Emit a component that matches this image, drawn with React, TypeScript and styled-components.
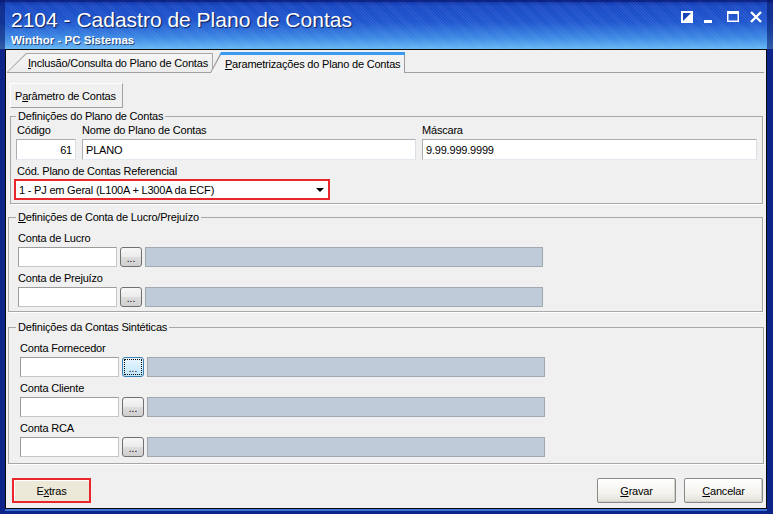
import React from 'react';
import styled, { createGlobalStyle } from 'styled-components';

const GlobalStyle = createGlobalStyle`
  html, body {
    margin: 0;
    padding: 0;
    background: #ffffff;
  }
  body {
    font-family: "Liberation Sans", Arial, sans-serif;
    font-size: 11px;
    letter-spacing: -0.2px;
    color: #000;
  }
  * {
    box-sizing: border-box;
  }
`;

const Window = styled.div`
  width: 773px;
  height: 514px;
  display: flex;
  flex-direction: column;
  background: #0d2588;
  overflow: hidden;
`;

/* barra de titulo */
const TitleBar = styled.div`
  height: 49px;
  flex: none;
  display: flex;
  justify-content: space-between;
  align-items: flex-start;
  padding: 8px 11px 0 11px;
  color: #fff;
  background:
    repeating-linear-gradient(45deg, rgba(255, 255, 255, 0.07) 0 1px, transparent 1px 2px),
    linear-gradient(180deg, #0b2a9e 0px, #1848c4 6px, #1d55cf 22px, #3b88e4 38px, #66b6f4 49px);
  box-shadow:
    inset 5px 0 0 rgba(6, 20, 100, 0.55),
    inset -6px 0 0 rgba(6, 20, 100, 0.55),
    inset 0 2px 0 rgba(6, 20, 100, 0.5);
`;

const TitleBlock = styled.div`
  display: flex;
  flex-direction: column;
`;

const Heading = styled.div`
  font-size: 21px;
  line-height: 24px;
  letter-spacing: 0;
  text-shadow: 1px 1px 1px rgba(0, 0, 40, 0.7);
`;

const SubHeading = styled.div`
  font-size: 11.5px;
  font-weight: bold;
  line-height: 13px;
  margin-top: 2px;
  letter-spacing: 0;
  text-shadow: 1px 1px 0 rgba(0, 0, 40, 0.6);
`;

const Controls = styled.div`
  display: flex;
  align-items: flex-start;
  margin-top: 3px;
`;

const ControlIcon = styled.svg<{ $gap?: number }>`
  display: block;
  margin-left: ${p => p.$gap ?? 0}px;
`;

/* area cliente */
const Client = styled.div`
  flex: 1;
  display: flex;
  flex-direction: column;
  margin: 0 6px 5px 5px;
  border: 1px solid #0a0a0a;
  background: #f0f0f0;
  box-shadow: 0 2px 0 #3a72d8;
`;

const TabsRow = styled.div`
  display: flex;
  align-items: flex-end;
  height: 21px;
  margin: 2px 0 -1px 1px;
  position: relative;
  z-index: 1;
`;

const TabShape = styled.div<{ $active?: boolean; $slant: number; $overlap?: number }>`
  display: flex;
  height: ${p => (p.$active ? 21 : 19)}px;
  margin-bottom: ${p => (p.$active ? 0 : 1)}px;
  margin-left: ${p => p.$overlap ?? 0}px;
  padding: ${p => (p.$active ? '3px 1px 0 1px' : '1px 1px 0 1px')};
  clip-path: polygon(${p => p.$slant}px 0, 100% 0, 100% 100%, 0 100%);
  background: ${p =>
    p.$active ? 'linear-gradient(180deg, #3a9af2 0 3px, #9a9a9a 3px)' : '#a6a6a6'};
`;

const TabFace = styled.div<{ $active?: boolean; $slant: number; $padLeft: number }>`
  flex: 1;
  display: flex;
  align-items: center;
  padding: 0 4px 0 ${p => p.$padLeft}px;
  white-space: nowrap;
  background: ${p => (p.$active ? '#f2f2f2' : 'linear-gradient(180deg, #f6f6f6, #ececec)')};
  clip-path: polygon(${p => p.$slant}px 0, 100% 0, 100% 100%, 0 100%);
`;

const Sheet = styled.div`
  height: 392px;
  flex: none;
  display: flex;
  flex-direction: column;
  margin: 0 2px 0 1px;
  border-top: 1px solid #a0a0a0;
`;

const PageButton = styled.div`
  width: 113px;
  height: 25px;
  margin: 10px 0 0 3px;
  padding-left: 4px;
  display: flex;
  align-items: center;
  border: 1px solid;
  border-color: #ffffff #a0a0a0 #a0a0a0 #ffffff;
  background: #f0f0f0;
`;

const Group = styled.fieldset<{ $mt: number; $ml: number; $mr: number; $pl: number }>`
  margin: ${p => p.$mt}px ${p => p.$mr}px 0 ${p => p.$ml}px;
  padding: 0 5px 0 ${p => p.$pl}px;
  min-width: 0;
  border: 1px solid #a7a7a7;
  box-shadow: 1px 1px 0 #ffffff;
  display: flex;
  flex-direction: column;
`;

const Legend = styled.legend<{ $offset: number }>`
  padding: 0 2px;
  margin-left: ${p => p.$offset}px;
  line-height: 13px;
  font-size: 11px;
`;

const PlanGrid = styled.div`
  display: grid;
  grid-template-columns: 60px 334px 1fr;
  column-gap: 6px;
`;

const FieldBlock = styled.div<{ $mt?: number; $pb?: number }>`
  display: flex;
  flex-direction: column;
  margin-top: ${p => p.$mt ?? 0}px;
  padding-bottom: ${p => p.$pb ?? 0}px;
`;

const FieldLabel = styled.div<{ $indent?: number }>`
  height: 14px;
  line-height: 14px;
  padding-left: ${p => p.$indent ?? 1}px;
  white-space: nowrap;
`;

const TextBox = styled.div<{ $align?: 'left' | 'right' }>`
  height: 21px;
  margin-top: 2px;
  padding: 0 3px;
  display: flex;
  align-items: center;
  justify-content: ${p => (p.$align === 'right' ? 'flex-end' : 'flex-start')};
  background: #ffffff;
  border: 1px solid;
  border-color: #abadb3 #dbdfe6 #e3e9ef #abadb3;
  white-space: nowrap;
`;

const Combo = styled.div`
  width: 316px;
  height: 21px;
  margin: 1px 0 0 -2px;
  padding: 0 4px 0 3px;
  display: flex;
  align-items: center;
  justify-content: space-between;
  background: #ffffff;
  border: 2px solid #e8262b;
  white-space: nowrap;
`;

const ComboArrow = styled.span`
  width: 0;
  height: 0;
  border-left: 4px solid transparent;
  border-right: 4px solid transparent;
  border-top: 4px solid #000;
`;

const GroupBody = styled.div<{ $pt: number; $pb: number }>`
  display: flex;
  flex-direction: column;
  gap: 4px;
  padding: ${p => p.$pt}px 0 ${p => p.$pb}px 0;
`;

const LookupRow = styled.div`
  display: flex;
  gap: 3px;
  height: 20px;
  margin-top: 2px;
`;

const CodeBox = styled.div`
  width: 99px;
  height: 20px;
  background: #ffffff;
  border: 1px solid #9c9c9c;
  border-right-color: #c6c6c6;
  border-bottom-color: #c6c6c6;
`;

const BrowseButton = styled.div<{ $focused?: boolean }>`
  width: 22px;
  height: 20px;
  display: flex;
  align-items: flex-end;
  justify-content: center;
  padding-bottom: 3px;
  font-size: 10px;
  line-height: 8px;
  letter-spacing: 0;
  border: 1px solid ${p => (p.$focused ? '#3c7fb1' : '#707070')};
  border-radius: 3px;
  background: ${p =>
    p.$focused
      ? 'linear-gradient(180deg, #eaf6fd, #bee6fd)'
      : 'linear-gradient(180deg, #f6f6f6 0%, #ebebeb 50%, #dddddd 51%, #cfcfcf 100%)'};
  outline: ${p => (p.$focused ? '1px dotted #000' : 'none')};
  outline-offset: -3px;
`;

const DescBox = styled.div`
  width: 398px;
  height: 20px;
  background: #bfcbd8;
  border: 1px solid #a2a8b0;
`;

const Footer = styled.div`
  flex: 1;
  display: flex;
  justify-content: space-between;
  align-items: flex-start;
  padding: 14px 3px 0 6px;
`;

const FooterActions = styled.div`
  display: flex;
  gap: 8px;
`;

const FooterButton = styled.div<{ $extras?: boolean }>`
  width: 79px;
  height: 25px;
  display: flex;
  align-items: center;
  justify-content: center;
  border: ${p => (p.$extras ? '2px solid #e8262b' : '1px solid #8a8a8a')};
  border-radius: ${p => (p.$extras ? 0 : 2)}px;
  background: ${p =>
    p.$extras ? '#ece9d8' : 'linear-gradient(180deg, #ffffff 0%, #f4f3ee 60%, #e2e0d8 100%)'};
  box-shadow: ${p => (p.$extras ? 'inset 1px 1px 0 #ffffff' : 'inset -1px -1px 0 #d0cfc8')};
`;

function LookupField({ label, focused }: { label: string; focused?: boolean }) {
  return (
    <FieldBlock>
      <FieldLabel $indent={0}>{label}</FieldLabel>
      <LookupRow>
        <CodeBox />
        <BrowseButton $focused={focused}>...</BrowseButton>
        <DescBox />
      </LookupRow>
    </FieldBlock>
  );
}

function Tab({
  active,
  slant,
  padLeft,
  overlap,
  children,
}: {
  active?: boolean;
  slant: number;
  padLeft: number;
  overlap?: number;
  children: React.ReactNode;
}) {
  const h = active ? 21 : 19;
  const pt = active ? 3 : 1;
  const faceSlant = (slant * (h - pt)) / h + 0.6;
  return (
    <TabShape $active={active} $slant={slant} $overlap={overlap}>
      <TabFace $active={active} $slant={faceSlant} $padLeft={padLeft}>
        {children}
      </TabFace>
    </TabShape>
  );
}

export default function App() {
  return (
    <>
      <GlobalStyle />
      <Window>
        <TitleBar>
          <TitleBlock>
            <Heading>2104 - Cadastro de Plano de Contas</Heading>
            <SubHeading>Winthor - PC Sistemas</SubHeading>
          </TitleBlock>
          <Controls>
            <ControlIcon width="12" height="12" viewBox="0 0 12 12">
              <rect x="0" y="0" width="12" height="12" fill="#ffffff" />
              <polygon points="2,2 10,2 2,10" fill="#1a43b8" />
            </ControlIcon>
            <ControlIcon $gap={11} width="8" height="12" viewBox="0 0 8 12">
              <rect x="0" y="9" width="8" height="3" fill="#ffffff" />
            </ControlIcon>
            <ControlIcon $gap={15} width="12" height="11" viewBox="0 0 12 11">
              <rect x="0" y="0" width="12" height="3" fill="#ffffff" />
              <rect x="0.75" y="0.75" width="10.5" height="9.5" fill="none" stroke="#ffffff" strokeWidth="1.5" />
            </ControlIcon>
            <ControlIcon $gap={11} width="12" height="12" viewBox="0 0 12 12">
              <path d="M1 1 L11 11 M11 1 L1 11" stroke="#ffffff" strokeWidth="2.4" />
            </ControlIcon>
          </Controls>
        </TitleBar>

        <Client>
          <TabsRow>
            <Tab slant={19} padLeft={20}>
              <span>
                <u>I</u>nclusão/Consulta do Plano de Contas
              </span>
            </Tab>
            <Tab active slant={11} padLeft={14} overlap={-3}>
              <span>
                <u>P</u>arametrizações do Plano de Contas
              </span>
            </Tab>
          </TabsRow>

          <Sheet>
            <PageButton>
              <span>
                P<u>a</u>râmetro de Contas
              </span>
            </PageButton>

            <Group $mt={2} $ml={3} $mr={1} $pl={5}>
              <Legend $offset={0}>Definições do Plano de Contas</Legend>
              <PlanGrid>
                <FieldBlock>
                  <FieldLabel>Código</FieldLabel>
                  <TextBox $align="right">61</TextBox>
                </FieldBlock>
                <FieldBlock>
                  <FieldLabel $indent={0}>Nome do Plano de Contas</FieldLabel>
                  <TextBox>PLANO</TextBox>
                </FieldBlock>
                <FieldBlock>
                  <FieldLabel $indent={0}>Máscara</FieldLabel>
                  <TextBox>9.99.999.9999</TextBox>
                </FieldBlock>
              </PlanGrid>
              <FieldBlock $mt={4} $pb={3}>
                <FieldLabel>Cód. Plano de Contas Referencial</FieldLabel>
                <Combo>
                  <span>1 - PJ em Geral (L100A + L300A da ECF)</span>
                  <ComboArrow />
                </Combo>
              </FieldBlock>
            </Group>

            <Group $mt={7} $ml={1} $mr={1} $pl={9}>
              <Legend $offset={-2}>
                <u>D</u>efinições de Conta de Lucro/Prejuízo
              </Legend>
              <GroupBody $pt={7} $pb={4}>
                <LookupField label="Conta de Lucro" />
                <LookupField label="Conta de Prejuízo" />
              </GroupBody>
            </Group>

            <Group $mt={9} $ml={1} $mr={0} $pl={11}>
              <Legend $offset={-4}>Definições da Contas Sintéticas</Legend>
              <GroupBody $pt={7} $pb={6}>
                <LookupField label="Conta Fornecedor" focused />
                <LookupField label="Conta Cliente" />
                <LookupField label="Conta RCA" />
              </GroupBody>
            </Group>
          </Sheet>

          <Footer>
            <FooterButton $extras>
              <span>
                E<u>x</u>tras
              </span>
            </FooterButton>
            <FooterActions>
              <FooterButton>
                <span>
                  <u>G</u>ravar
                </span>
              </FooterButton>
              <FooterButton>
                <span>
                  <u>C</u>ancelar
                </span>
              </FooterButton>
            </FooterActions>
          </Footer>
        </Client>
      </Window>
    </>
  );
}
